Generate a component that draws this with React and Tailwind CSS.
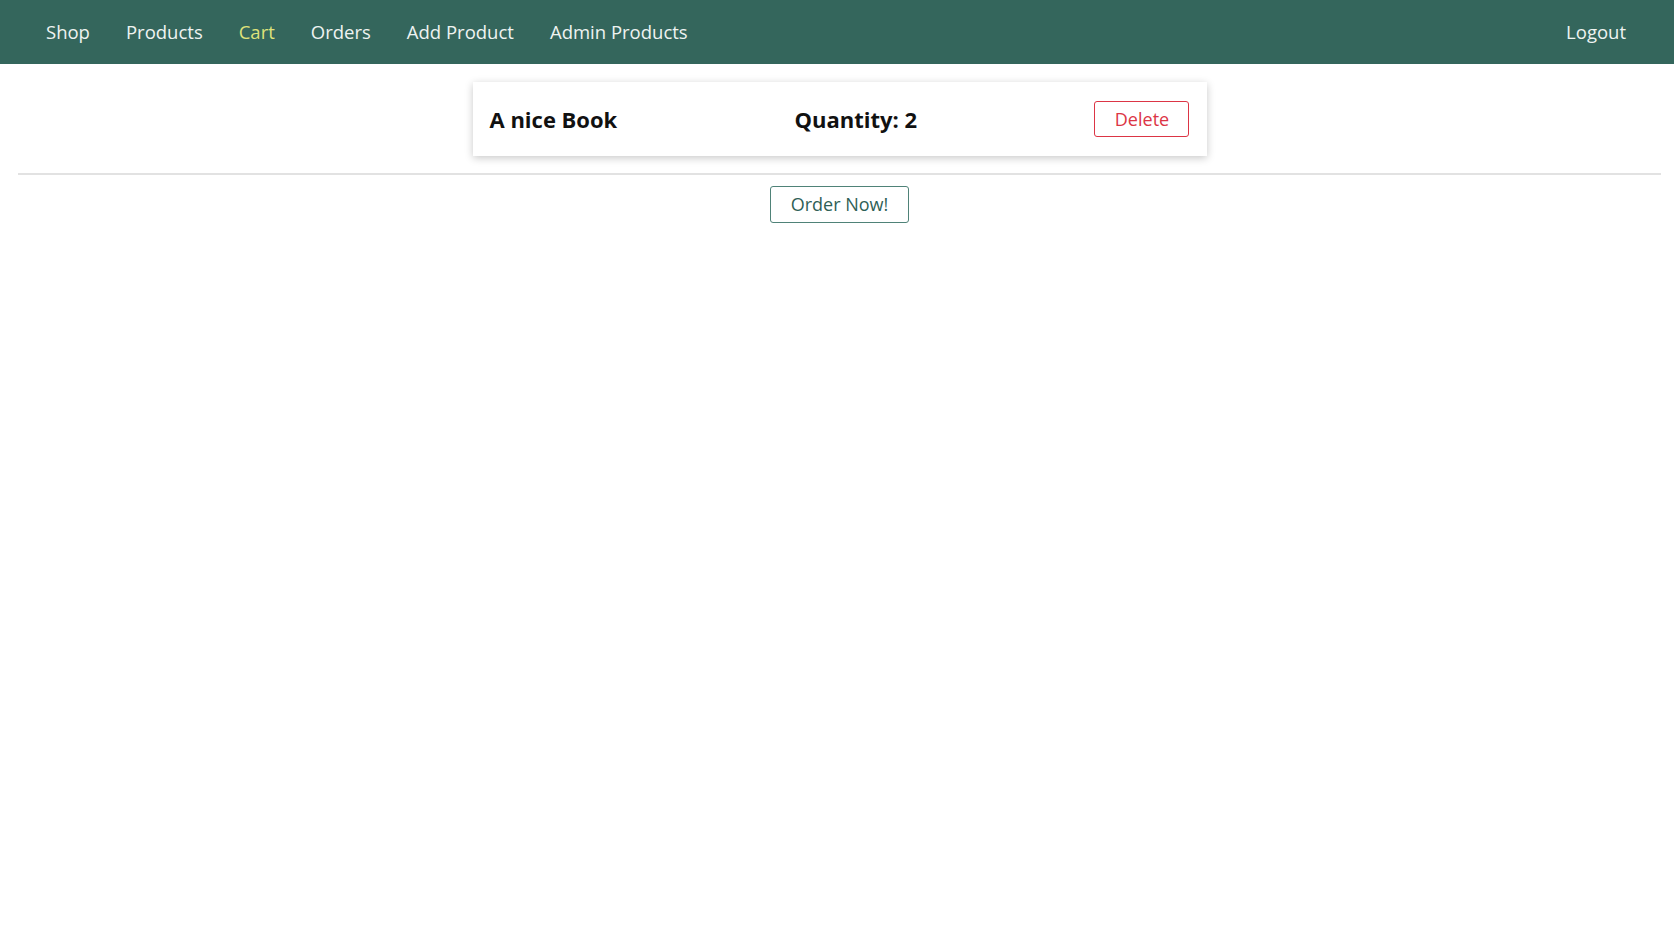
import React from 'react';

const navItems = ['Shop', 'Products', 'Cart', 'Orders', 'Add Product', 'Admin Products'];

const App = () => {
  return (
    <div className="min-h-screen bg-white" style={{ fontFamily: '"Open Sans", sans-serif' }}>
      <header className="h-[64px] bg-[#34665c] flex items-center justify-between pl-[46px] pr-[48px]">
        <nav className="flex items-center gap-[36px]">
          {navItems.map((item) => (
            <a
              key={item}
              href="#"
              className={`text-[18.5px] font-medium ${item === 'Cart' ? 'text-[#dfe27a]' : 'text-[#eef3f1]'}`}
            >
              {item}
            </a>
          ))}
        </nav>
        <a href="#" className="text-[18.5px] font-medium text-[#eef3f1]">Logout</a>
      </header>

      <main className="pl-[18px] pr-[13px]">
        <ul className="pt-[18px]">
          <li className="mx-auto w-[734px] h-[74px] flex items-center justify-between px-[17px] shadow-[0_2px_8px_rgba(0,0,0,0.22)]">
            <h2 className="text-[22px] font-bold text-[#111]">A nice Book</h2>
            <h2 className="text-[22px] font-bold text-[#111]">Quantity: 2</h2>
            <button className="w-[95px] h-[36px] border border-[#dc3545] rounded-[3px] text-[18px] text-[#dc3545]">
              Delete
            </button>
          </li>
        </ul>
        <hr className="mt-[17px] border-t-[2px] border-[#e2e2e2]" />
        <div className="flex justify-center pt-[11px]">
          <button className="w-[139px] h-[37px] border border-[#4f8278] rounded-[3px] text-[18px] text-[#2f5f56]">
            Order Now!
          </button>
        </div>
      </main>
    </div>
  );
};

export default App;
